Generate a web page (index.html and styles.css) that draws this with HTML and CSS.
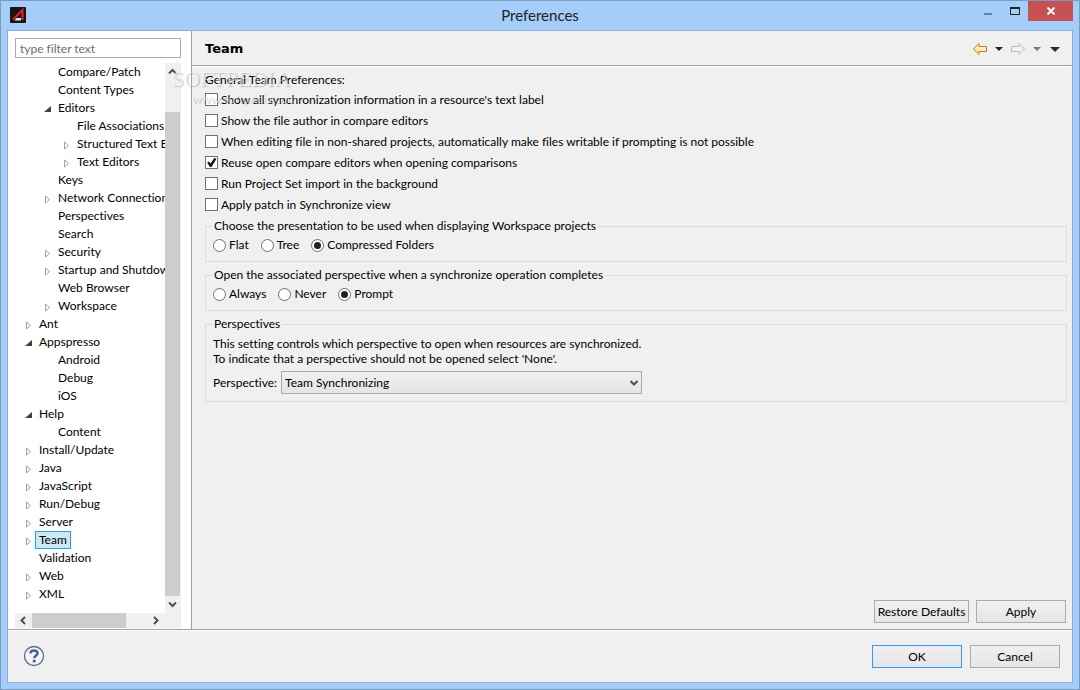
FILE: index.html
```html
<!DOCTYPE html>
<html lang="en">
<head>
  <meta charset="UTF-8" />
  <meta name="viewport" content="width=device-width, initial-scale=1.0" />
  <title>Preferences</title>
  <link rel="stylesheet" href="styles.css">
</head>
<body>
  <div class="window">
    <header class="titlebar">
      <svg class="app-icon" width="16" height="16" viewBox="0 0 16 16">
        <rect width="16" height="16" rx="1" fill="#1c1412" />
        <path d="M3 12.500 L12.500 3 V13" fill="none" stroke="#e0202c" stroke-width="2" />
        <path d="M4.500 13.500 L6.500 11 H11 V13.500 Z" fill="#e8e8e8" />
      </svg>
      <h1 class="title">Preferences</h1>
      <div class="window-buttons">
        <button class="win-btn" aria-label="Minimize">
          <svg width="8" height="10" viewBox="0 0 8 10"><rect y="7" width="8" height="2" fill="#6c7f97" /></svg>
        </button>
        <button class="win-btn" aria-label="Maximize">
          <svg width="10" height="8" viewBox="0 0 10 8"><path d="M0 0H10V8H0Z M1 2V7H9V2Z" fill="#222" fill-rule="evenodd" /></svg>
        </button>
        <button class="win-btn close" aria-label="Close">
          <svg width="8" height="8" viewBox="0 0 8 8"><path d="M0.500 0.500 L7.500 7.500 M7.500 0.500 L0.500 7.500" stroke="#fff" stroke-width="2" /></svg>
        </button>
      </div>
    </header>

    <div class="dialog">
      <div class="main">
        <nav class="sidebar">
          <input class="filter" type="text" placeholder="type filter text" aria-label="Filter">
          <div class="tree-box">
            <ul class="tree">
              <li class="d1">Compare/Patch</li>
              <li class="d1">Content Types</li>
              <li class="d1 open">Editors</li>
              <li class="d2">File Associations</li>
              <li class="d2 closed">Structured Text Editors</li>
              <li class="d2 closed">Text Editors</li>
              <li class="d1">Keys</li>
              <li class="d1 closed">Network Connections</li>
              <li class="d1">Perspectives</li>
              <li class="d1">Search</li>
              <li class="d1 closed">Security</li>
              <li class="d1 closed">Startup and Shutdown</li>
              <li class="d1">Web Browser</li>
              <li class="d1 closed">Workspace</li>
              <li class="closed">Ant</li>
              <li class="open">Appspresso</li>
              <li class="d1">Android</li>
              <li class="d1">Debug</li>
              <li class="d1">iOS</li>
              <li class="open">Help</li>
              <li class="d1">Content</li>
              <li class="closed">Install/Update</li>
              <li class="closed">Java</li>
              <li class="closed">JavaScript</li>
              <li class="closed">Run/Debug</li>
              <li class="closed">Server</li>
              <li class="closed"><span class="selected">Team</span></li>
              <li>Validation</li>
              <li class="closed">Web</li>
              <li class="closed">XML</li>
            </ul>
            <div class="vscroll">
              <svg width="15" height="17" viewBox="0 0 15 17"><path d="M4 10.500 L7.500 7 L11 10.500" /></svg>
              <div class="vthumb"></div>
              <svg width="15" height="17" viewBox="0 0 15 17"><path d="M4 6.500 L7.500 10 L11 6.500" /></svg>
            </div>
            <div class="hscroll">
              <svg width="17" height="15" viewBox="0 0 17 15"><path d="M10 4 L6.500 7.500 L10 11" /></svg>
              <div class="hthumb"></div>
              <svg width="17" height="15" viewBox="0 0 17 15"><path d="M6 4 L9.500 7.500 L6 11" /></svg>
            </div>
          </div>
        </nav>

        <section class="page">
          <div class="page-header">
            <h2>Team</h2>
            <div class="history">
              <button aria-label="Back">
                <svg width="16" height="14" viewBox="0 0 16 14">
                  <defs><linearGradient id="gold" x2="0" y2="1"><stop offset="0" stop-color="#fffbe0" /><stop offset="1" stop-color="#fbe08a" /></linearGradient></defs>
                  <path d="M1.500 7 L7 1.500 V4.500 H14.500 V9.500 H7 V12.500 Z" fill="url(#gold)" stroke="#b8801c" />
                </svg>
              </button>
              <button aria-label="Back history"><svg width="8" height="4" viewBox="0 0 8 4"><path d="M0 0H8L4 4Z" fill="#222" /></svg></button>
              <button aria-label="Forward">
                <svg width="16" height="14" viewBox="0 0 16 14"><path d="M14.500 7 L9 1.500 V4.500 H1.500 V9.500 H9 V12.500 Z" fill="#f3f3ef" stroke="#b9b9b4" /></svg>
              </button>
              <button aria-label="Forward history"><svg width="8" height="4" viewBox="0 0 8 4"><path d="M0 0H8L4 4Z" fill="#777" /></svg></button>
              <button class="menu" aria-label="Menu"><svg width="10" height="5" viewBox="0 0 10 5"><path d="M0 0H10L5 5Z" fill="#27264c" /></svg></button>
            </div>
          </div>

          <form class="content">
            <p class="intro">General Team Preferences:</p>
            <label class="check"><input type="checkbox">Show all synchronization information in a resource's text label</label>
            <label class="check"><input type="checkbox">Show the file author in compare editors</label>
            <label class="check"><input type="checkbox">When editing file in non-shared projects, automatically make files writable if prompting is not possible</label>
            <label class="check"><input type="checkbox" checked>Reuse open compare editors when opening comparisons</label>
            <label class="check"><input type="checkbox">Run Project Set import in the background</label>
            <label class="check"><input type="checkbox">Apply patch in Synchronize view</label>

            <fieldset>
              <legend>Choose the presentation to be used when displaying Workspace projects</legend>
              <div class="radios">
                <label><input type="radio" name="presentation">Flat</label>
                <label><input type="radio" name="presentation">Tree</label>
                <label><input type="radio" name="presentation" checked>Compressed Folders</label>
              </div>
            </fieldset>
            <fieldset>
              <legend>Open the associated perspective when a synchronize operation completes</legend>
              <div class="radios">
                <label><input type="radio" name="open">Always</label>
                <label><input type="radio" name="open">Never</label>
                <label><input type="radio" name="open" checked>Prompt</label>
              </div>
            </fieldset>
            <fieldset>
              <legend>Perspectives</legend>
              <p class="hint">This setting controls which perspective to open when resources are synchronized.<br>To indicate that a perspective should not be opened select 'None'.</p>
              <div class="field">
                <label for="perspective">Perspective:</label>
                <div class="select">
                  <select id="perspective">
                    <option>Team Synchronizing</option>
                  </select>
                  <svg width="10" height="8" viewBox="0 0 10 8"><path d="M1.500 2 L5 5.500 L8.500 2" /></svg>
                </div>
              </div>
            </fieldset>

            <div class="page-buttons">
              <button type="button" class="btn wide">Restore Defaults</button>
              <button type="button" class="btn">Apply</button>
            </div>
          </form>
          <div class="watermark">
            <span class="wm-name">SOFTPEDIA<sup>™</sup></span>
            <span class="wm-url">www.softpedia.com</span>
          </div>
        </section>
      </div>

      <footer class="footer">
        <button class="help" aria-label="Help">
          <svg width="22" height="22" viewBox="0 0 22 22">
            <circle cx="11" cy="11" r="9.500" fill="#f4f5f8" stroke="#5b6b8c" stroke-width="1.300" />
            <path d="M7.500 8.500 C7.500 4.500 14.500 4.500 14.500 8.300 C14.500 10.800 11.200 10.700 11.200 13.300" fill="none" stroke="#50628a" stroke-width="2.600" />
            <rect x="9.800" y="14.800" width="2.800" height="2.600" fill="#50628a" />
          </svg>
        </button>
        <button class="btn default">OK</button>
        <button class="btn">Cancel</button>
      </footer>
    </div>
  </div>
</body>
</html>
```
FILE: styles.css
```css
:root {
  --frame: #a4cdf9;
  --frame-edge: #7b9cc2;
  --face: #f0f0f0;
  --line: #a0a0a0;
  --font: Lato, "Open Sans", sans-serif;
}
* { box-sizing: border-box; margin: 0; padding: 0; }
body, input, button, select {
  font-family: var(--font);
  font-size: 12px;
  font-variant-ligatures: none;
  color: #000;
}
body { line-height: 16px; }
button { border: none; background: none; }
svg { display: block; }

.window {
  display: flex;
  flex-direction: column;
  height: 100vh;
  padding: 0 6px 6px;
  background: var(--frame);
  border: 1px solid var(--frame-edge);
}
.titlebar {
  display: grid;
  grid-template-columns: 1fr auto 1fr;
  height: 29px;
}
.app-icon { margin: 6px 3px; }
.title {
  font-size: 15px;
  font-weight: 400;
  line-height: 29px;
  color: #222;
}
.window-buttons {
  display: flex;
  justify-content: flex-end;
}
.win-btn {
  display: flex;
  align-items: center;
  justify-content: center;
  width: 27px;
  height: 20px;
}
.win-btn.close {
  width: 45px;
  background: #c75050;
}

.dialog {
  flex: 1;
  display: flex;
  flex-direction: column;
  min-height: 0;
  background: var(--face);
  border: 1px solid #8aaed8;
}
.main {
  flex: 1;
  display: flex;
  min-height: 0;
}

/* tree */
.sidebar {
  display: flex;
  flex-direction: column;
  gap: 5px;
  width: 184px;
  padding: 7px 10px 1px 7px;
  background: #fff;
  border-right: 1px solid var(--line);
}
.filter {
  height: 20px;
  padding: 0 4px;
  border: 1px solid #abadb3;
}
.filter::placeholder { color: #6d6d6d; }
.tree-box {
  flex: 1;
  display: grid;
  grid-template: 1fr 15px / 1fr 16px;
  min-height: 0;
  background: var(--face);
}
.tree {
  list-style: none;
  overflow: hidden;
  background: #fff;
}
.tree li {
  display: flex;
  align-items: center;
  height: 18px;
  padding-left: 8px;
  white-space: nowrap;
}
.tree li.d1 { padding-left: 27px; }
.tree li.d2 { padding-left: 46px; }
.tree li::before {
  content: "";
  flex: none;
  width: 7px;
  height: 9px;
  margin: 3px 7px 0 2px;
}
.tree .open::before {
  height: 6px;
  margin-top: 2px;
  background: #404040;
  clip-path: polygon(100% 0, 100% 100%, 0 100%);
}
.tree .closed::before {
  background:
    url("data:image/svg+xml,%3Csvg xmlns='http://www.w3.org/2000/svg' width='7' height='9'%3E%3Cpath d='M1.500 1 L5.500 4.500 L1.500 8 Z' fill='white' stroke='%23a0a0a0'/%3E%3C/svg%3E");
}
.selected {
  height: 18px;
  margin-left: -4px;
  padding: 0 3px;
  background: #cbe8f6;
  border: 1px solid #26a0da;
}
.vscroll {
  display: flex;
  flex-direction: column;
}
.vthumb {
  flex: 1;
  width: 15px;
  margin-top: 32px;
  background: #cdcdcd;
}
.hscroll { display: flex; }
.hthumb {
  flex: 1;
  margin-right: 22px;
  background: #cdcdcd;
}
.vscroll path, .hscroll path, .select path {
  fill: none;
  stroke: #505050;
  stroke-width: 2;
}

/* page */
.page {
  position: relative;
  flex: 1;
  display: flex;
  flex-direction: column;
}
.page-header {
  display: flex;
  align-items: center;
  justify-content: space-between;
  height: 35px;
  padding: 2px 12px 0 13px;
  border-bottom: 1px solid var(--line);
  box-shadow: 0 1px #fff;
}
h2 {
  font: bold 13px/16px "DejaVu Sans", sans-serif;
}
.history {
  display: flex;
  align-items: center;
  gap: 7px;
}
.history .menu { margin-left: 2px; }
.content {
  flex: 1;
  display: flex;
  flex-direction: column;
  padding: 6px 5px 6px 13px;
}
.intro { height: 17px; }
.check {
  display: flex;
  align-items: center;
  align-self: flex-start;
  gap: 3px;
  height: 21px;
}
input[type="checkbox"], input[type="radio"] {
  appearance: none;
  flex: none;
  width: 13px;
  height: 13px;
  background: #fff;
  border: 1px solid #707070;
}
input[type="radio"] { border-radius: 50%; }
input[type="checkbox"]:checked::before {
  content: "";
  display: block;
  height: 11px;
  background: #111;
  clip-path: polygon(10% 50%, 27% 40%, 42% 60%, 75% 8%, 95% 16%, 50% 92%, 36% 92%);
}
input[type="radio"]:checked::before {
  content: "";
  display: block;
  width: 7px;
  height: 7px;
  margin: 2px;
  border-radius: 50%;
  background: #222;
}
fieldset {
  margin-top: 5px;
  padding: 2px 7px 7px;
  border: 1px solid #dcdcdc;
}
.check + fieldset { margin-top: 3px; }
legend {
  margin-left: -1px;
  padding: 0 2px;
}
.radios {
  display: flex;
  gap: 12px;
  height: 18px;
  align-items: center;
}
.radios label {
  display: flex;
  align-items: center;
  gap: 3px;
}
.hint {
  padding-top: 2px;
  line-height: 15px;
}
.field {
  display: flex;
  align-items: center;
  gap: 4px;
  margin-top: 5px;
}
.select {
  position: relative;
  width: 361px;
}
select {
  appearance: none;
  display: block;
  width: 100%;
  height: 23px;
  padding: 0 3px;
  border: 1px solid #acacac;
  background: linear-gradient(#f0f0f0, #e5e5e5);
}
.select svg {
  position: absolute;
  top: 8px;
  right: 3px;
  pointer-events: none;
}
.page-buttons {
  display: flex;
  justify-content: flex-end;
  gap: 7px;
  margin-top: auto;
  padding-right: 1px;
}
.btn {
  width: 90px;
  height: 23px;
  border: 1px solid #acacac;
  background: linear-gradient(#f0f0f0, #e5e5e5);
}
.btn.wide { width: 95px; }
.btn.default { border-color: #3399ff; }

.watermark {
  position: absolute;
  top: 36px;
  left: -20px;
  display: flex;
  flex-direction: column;
  pointer-events: none;
  color: rgba(255, 255, 255, 0.5);
  text-shadow: 1px 1px 1px rgba(0, 0, 0, 0.2);
}
.wm-name {
  font: 22px/24px "Liberation Serif", serif;
}
.wm-name sup { font-size: 8px; vertical-align: top; }
.wm-url {
  padding-left: 20px;
  font-size: 12px;
}

.footer {
  display: flex;
  align-items: center;
  gap: 8px;
  height: 53px;
  padding: 0 12px 0 15px;
  border-top: 1px solid var(--line);
  box-shadow: inset 0 1px #fff;
}
.help { margin-right: auto; }
```
